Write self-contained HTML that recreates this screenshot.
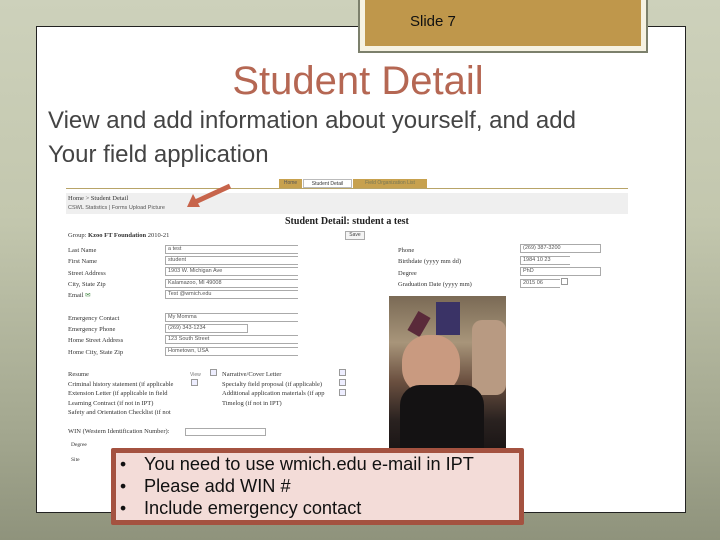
<!DOCTYPE html>
<html><head><meta charset="utf-8"><style>
*{margin:0;padding:0;box-sizing:border-box}
body{width:720px;height:540px;overflow:hidden;position:relative;font-family:"Liberation Sans",sans-serif;
background:linear-gradient(180deg,#cdd1bb 0%,#c3c7ae 40%,#a3a78f 80%,#8f937c 100%)}
.a{position:absolute}
.s{font-family:"Liberation Serif",serif;font-size:6.5px;color:#333;white-space:nowrap}
.f{position:absolute;height:9px;border:1px solid #aaa;border-right:none;background:#fff;font-family:"Liberation Sans",sans-serif;font-size:5.5px;color:#555;padding-left:2px;line-height:7px;white-space:nowrap}
.ic{position:absolute;width:7px;height:7px;border:1px solid #999;background:#eef}
</style></head><body>
<div class="a" style="left:36px;top:26px;width:650px;height:487px;background:#fff;border:1px solid #222"></div>
<div class="a" style="left:358px;top:-4px;width:290px;height:57px;background:#f6f2e2;border:2px solid #7c806c"></div>
<div class="a" style="left:365px;top:0;width:276px;height:46px;background:#bf974b"></div>
<div class="a" style="left:410px;top:13px;font-size:15px;color:#111">Slide 7</div>
<div class="a" style="left:0;width:720px;top:57px;text-align:center;font-size:40px;color:#b56753;line-height:48px;padding-right:4px">Student Detail</div>
<div class="a" style="left:48px;top:104px;font-size:24px;color:#444;line-height:34px">View and add information about yourself, and add<br>Your field application</div>

<!-- screenshot -->
<div class="a" style="left:66px;top:188px;width:562px;height:1px;background:#b8a468"></div>
<div class="a" style="left:279px;top:179px;width:23px;height:9px;background:#c7a14e;font-size:5px;color:#555;text-align:center;line-height:9px">Home</div>
<div class="a" style="left:303px;top:179px;width:49px;height:9px;background:#fff;border:1px solid #bbb;font-size:5px;color:#333;text-align:center;line-height:8px">Student Detail</div>
<div class="a" style="left:353px;top:179px;width:74px;height:9px;background:#c7a14e;font-size:5px;color:#775;text-align:center;line-height:9px">Field Organization List</div>
<div class="a" style="left:66px;top:193px;width:562px;height:21px;background:#efefef"></div>
<div class="a s" style="left:68px;top:195px">Home &gt; Student Detail</div>
<div class="a" style="left:68px;top:205px;font-size:5.5px;color:#555">CSWL Statistics | Forms  Upload Picture</div>
<svg class="a" style="left:185px;top:183px" width="48" height="28"><line x1="45" y1="3" x2="8" y2="20" stroke="#c7644b" stroke-width="5"/><polygon points="2,24 8,11 15,24" fill="#c7644b"/></svg>
<div class="a" style="left:285px;top:216px;font-family:'Liberation Serif',serif;font-size:10px;font-weight:bold;color:#222">Student Detail: student a test</div>
<div class="a" style="left:345px;top:231px;width:20px;height:9px;border:1px solid #aaa;background:#f4f4f4;font-size:5px;text-align:center;line-height:7px;color:#444">Save</div>
<div class="a s" style="left:68px;top:232px">Group: <b>Kzoo FT Foundation</b> 2010-21</div>
<div class="a s" style="left:68px;top:245px;line-height:11.3px">Last Name<br>First Name<br>Street Address<br>City, State Zip<br>Email <span style="color:#484">✉</span><br><br>Emergency Contact<br>Emergency Phone<br>Home Street Address<br>Home City, State Zip</div>
<div class="f" style="left:165px;top:245px;width:133px">a test</div>
<div class="f" style="left:165px;top:256px;width:133px">student</div>
<div class="f" style="left:165px;top:267px;width:133px">1903 W. Michigan Ave</div>
<div class="f" style="left:165px;top:279px;width:133px">Kalamazoo, MI 49008</div>
<div class="f" style="left:165px;top:290px;width:133px">Test @wmich.edu</div>
<div class="f" style="left:165px;top:313px;width:133px">My Momma</div>
<div class="f" style="left:165px;top:324px;width:83px;border-right:1px solid #aaa">(269) 343-1234</div>
<div class="f" style="left:165px;top:335px;width:133px">123 South Street</div>
<div class="f" style="left:165px;top:347px;width:133px">Hometown, USA</div>
<div class="a s" style="left:398px;top:245px;line-height:11.3px">Phone<br>Birthdate (yyyy mm dd)<br>Degree<br>Graduation Date (yyyy mm)</div>
<div class="f" style="left:520px;top:244px;width:81px;border-right:1px solid #aaa">(269) 387-3200</div>
<div class="f" style="left:520px;top:256px;width:50px">1984 10 23</div>
<div class="f" style="left:520px;top:267px;width:81px;border-right:1px solid #aaa">PhD</div>
<div class="f" style="left:520px;top:279px;width:40px">2015 06</div>
<div class="ic" style="left:561px;top:278px;background:#fff"></div>
<div class="a s" style="left:68px;top:370px;line-height:9.5px">Resume<br>Criminal history statement (if applicable<br>Extension Letter (if applicable in field<br>Learning Contract (if not in IPT)<br>Safety and Orientation Checklist (if not</div>
<div class="a" style="left:190px;top:372px;font-size:5px;color:#777">View</div>
<div class="ic" style="left:210px;top:369px"></div>
<div class="ic" style="left:191px;top:379px"></div>
<div class="a s" style="left:222px;top:370px;line-height:9.5px">Narrative/Cover Letter<br>Specialty field proposal (if applicable)<br>Additional application materials (if app<br>Timelog (if not in IPT)</div>
<div class="ic" style="left:339px;top:369px"></div>
<div class="ic" style="left:339px;top:379px"></div>
<div class="ic" style="left:339px;top:389px"></div>
<div class="a s" style="left:68px;top:428px">WIN (Western Identification Number):</div>
<div class="a" style="left:185px;top:428px;width:81px;height:8px;border:1px solid #aaa"></div>
<div class="a s" style="left:71px;top:442px;font-size:5.5px">Degree</div>
<div class="a s" style="left:71px;top:457px;font-size:5.5px">Site</div>

<!-- photo -->
<div class="a" style="left:389px;top:296px;width:117px;height:155px;background:linear-gradient(180deg,#7a6a55 0%,#a8957a 30%,#6b5040 55%,#2a2220 80%,#1a1515 100%)"></div>
<div class="a" style="left:436px;top:302px;width:24px;height:33px;background:#3a3366"></div>
<div class="a" style="left:412px;top:313px;width:14px;height:22px;background:#5a2a3a;transform:rotate(30deg)"></div>
<div class="a" style="left:472px;top:320px;width:34px;height:75px;background:#b89a82;border-radius:10px"></div>
<div class="a" style="left:402px;top:335px;width:58px;height:60px;background:#c99a80;border-radius:45%"></div>
<div class="a" style="left:400px;top:385px;width:84px;height:66px;background:#141213;border-radius:20px 20px 0 0"></div>

<!-- callout -->
<div class="a" style="left:111px;top:448px;width:413px;height:77px;background:#f3dcd8;border:5px solid #a45240;border-radius:2px"></div>
<div class="a" style="left:120px;top:453px;font-size:17.5px;color:#111;line-height:22px">
<div>•<span style="position:absolute;left:24px;font-size:18.2px;white-space:nowrap">You need to use wmich.edu e-mail in IPT</span></div>
<div>•<span style="position:absolute;left:24px;font-size:18.2px;white-space:nowrap">Please add WIN #</span></div>
<div>•<span style="position:absolute;left:24px;font-size:18.2px;white-space:nowrap">Include emergency contact</span></div></div>
</body></html>
